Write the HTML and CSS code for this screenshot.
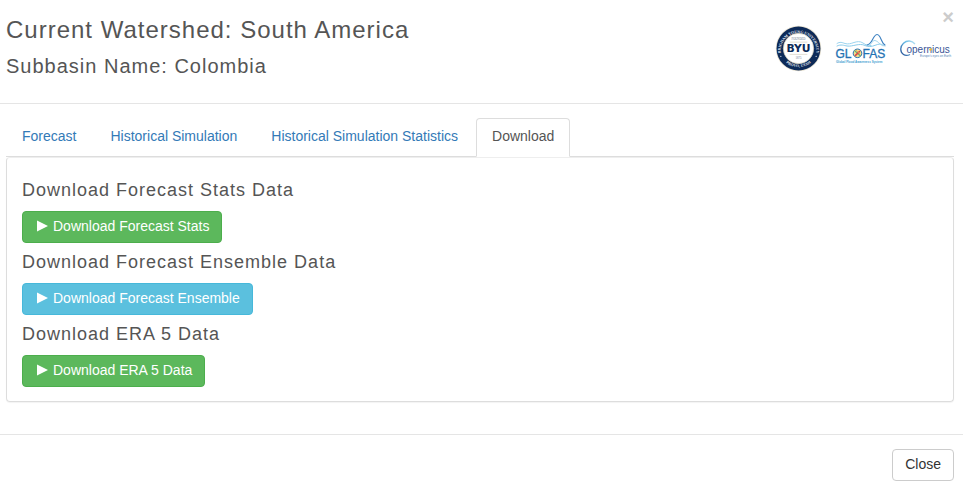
FILE: index.html
```html
<!DOCTYPE html>
<html lang="en">
<head>
<meta charset="utf-8">
<title>Current Watershed: South America</title>
<link rel="stylesheet" href="styles.css">
</head>
<body>
<main class="modal">
  <header class="modal-header">
    <div class="titles">
      <h1>Current Watershed: South America</h1>
      <h2>Subbasin Name: Colombia</h2>
    </div>
    <div class="logos">
      <svg class="logo-byu" viewBox="0 0 48 48" role="img" aria-label="Brigham Young University">
        <defs>
          <path id="arc-top" d="M7.500 34A18.200 18.200 0 1 1 40.500 34"/>
          <path id="arc-bottom" d="M7 34A20.500 20.500 0 0 0 41 34"/>
        </defs>
        <circle cx="24" cy="24" r="23.2" fill="#e6e0cf"/>
        <circle cx="24" cy="24" r="22.4" fill="#0d2a58"/>
        <circle cx="24" cy="24" r="15.500" fill="#fff" stroke="#d5cdb5" stroke-width=".7"/>
        <text class="ring"><textPath href="#arc-top" startOffset="50%">BRIGHAM YOUNG UNIVERSITY</textPath></text>
        <text class="ring"><textPath href="#arc-bottom" startOffset="50%">PROVO, UTAH</textPath></text>
        <circle cx="6" cy="32" r=".6" fill="#fff"/><circle cx="42" cy="32" r=".6" fill="#fff"/>
        <text class="seal-small" x="24" y="15">FOUNDED</text>
        <path d="M15 17.500H33M15 30H33" stroke="#cfc8b5" stroke-width=".6"/>
        <text class="seal-name" x="24" y="27.500">BYU</text>
        <text class="seal-small" x="24" y="35">1875</text>
      </svg>
      <svg class="logo-glofas" viewBox="0 0 50 30" role="img" aria-label="GLOFAS Global Flood Awareness System">
        <g fill="none" stroke-linecap="round">
          <path d="M1 9.500C4 7.500 6 8.500 9 9.500S15 9.500 18 8.500 24 7 27 9 31 11.500 35 11.500" stroke="#9bd4ef"/>
          <path d="M1 12C5 10 8 11.500 11 12S17 11.500 20 11 26 10 29 11.500 35 13 40 11 46 11 49 12" stroke="#8acbea"/>
          <path d="M31 11C35 10.500 36 6 38 3S42-.5 44 3 46 9.500 49 11" stroke="#3a7fc0" stroke-width="1.100"/>
          <path d="M33 11C36 11 36 6 39 6.500S43 10 47 12" stroke="#a6d8ef"/>
        </g>
        <text class="glofas-name" x="-.5" y="24" fill="#2372b3">GL</text>
        <circle cx="21.500" cy="19.300" r="4.300" fill="#f4df8a" stroke="#2372b3" stroke-width="1"/>
        <path d="M18.500 16.500L24.500 22" stroke="#67aa75" stroke-width="1.100"/>
        <path d="M19 21.800L24 17" stroke="#d84a47" stroke-width="1.600"/>
        <path d="M20 16L24 20" stroke="#e9a653" stroke-width=".8"/>
        <text class="glofas-name" x="26.500" y="24" fill="#2372b3">FAS</text>
        <text class="tagline" x="0" y="29" fill="#43a0d1">Global Flood Awareness System</text>
      </svg>
      <svg class="logo-copernicus" viewBox="0 0 50 18" role="img" aria-label="Copernicus Europe's eyes on Earth">
        <defs>
          <linearGradient id="swoosh" x1="0" y1="1" x2="1" y2="0">
            <stop offset="0" stop-color="#244c93"/><stop offset=".6" stop-color="#64b9e4"/><stop offset="1" stop-color="#bfe5f5"/>
          </linearGradient>
        </defs>
        <path d="M15 4C12 .3 7 0 3.500 3.200S-.3 12 3.500 14.500C5.500 15.800 8 15.500 10 14.500" fill="none" stroke="url(#swoosh)" stroke-width="1.300"/>
        <text class="copernicus-name" x="6.500" y="12.500" fill="#3a5596">opernicus</text>
        <circle cx="30.500" cy="9.500" r="1.300" fill="#f1bd35"/>
        <text class="tagline" x="20" y="17" fill="#5483b6">Europe's eyes on Earth</text>
      </svg>
    </div>
    <button class="dismiss" type="button" aria-label="Dismiss">×</button>
  </header>

  <section class="modal-body">
    <nav class="tabs">
      <a href="#forecast">Forecast</a>
      <a href="#historical">Historical Simulation</a>
      <a href="#statistics">Historical Simulation Statistics</a>
      <a class="active" href="#download" aria-current="page">Download</a>
    </nav>
    <div class="panel" id="download">
      <h3>Download Forecast Stats Data</h3>
      <button class="btn success" type="button"><svg class="play" viewBox="0 0 11 12" aria-hidden="true"><path d="M0 .4L11 6L0 11.600Z"/></svg>Download Forecast Stats</button>
      <h3>Download Forecast Ensemble Data</h3>
      <button class="btn info" type="button"><svg class="play" viewBox="0 0 11 12" aria-hidden="true"><path d="M0 .4L11 6L0 11.600Z"/></svg>Download Forecast Ensemble</button>
      <h3>Download ERA 5 Data</h3>
      <button class="btn success" type="button"><svg class="play" viewBox="0 0 11 12" aria-hidden="true"><path d="M0 .4L11 6L0 11.600Z"/></svg>Download ERA 5 Data</button>
    </div>
  </section>

  <footer class="modal-footer">
    <button class="btn default" type="button">Close</button>
  </footer>
</main>
</body>
</html>
```
FILE: styles.css
```css
* { box-sizing: border-box; }

body {
  margin: 0;
  background: #fff;
  color: #555;
  font-family: "Liberation Sans", Arial, sans-serif;
  font-size: 14px;
  line-height: 20px;
}

h1, h2, h3 {
  margin: 0;
  font-weight: 400;
  letter-spacing: 1px;
}

h1 { font-size: 24px; line-height: 28px; }
h2 { margin-top: 10px; font-size: 20px; line-height: 24px; }
h3 { font-size: 18px; line-height: 20px; }

.modal-header {
  position: relative;
  display: flex;
  justify-content: space-between;
  align-items: flex-start;
  padding: 16px 13px 25px 6px;
  border-bottom: 1px solid #e5e5e5;
}

.logos {
  display: flex;
  align-items: center;
  gap: 14px;
  padding-top: 9px;
}

.logos svg { display: block; overflow: visible; }
.logo-byu { width: 47px; height: 47px; }
.logo-glofas { width: 50px; height: 30px; }
.logo-copernicus { width: 50px; height: 18px; }

.ring {
  fill: #e9edf4;
  font: 700 4px "Liberation Serif", serif;
  text-anchor: middle;
}

.seal-small {
  fill: #6c7890;
  font: 3px "Liberation Serif", serif;
  text-anchor: middle;
}

.seal-name {
  fill: #0d2a58;
  font: 700 11px "DejaVu Sans", sans-serif;
  text-anchor: middle;
}

.glofas-name {
  font: 12px "Liberation Sans", sans-serif;
  stroke: #2372b3;
  stroke-width: .3px;
}

.copernicus-name { font: 10px "Liberation Sans", sans-serif; }

.tagline { font: 3px "Liberation Sans", sans-serif; }
.logo-glofas .tagline { font-weight: 700; }

.dismiss {
  position: absolute;
  top: 7px;
  right: 9px;
  padding: 0;
  border: 0;
  background: none;
  color: #ccc;
  font: 700 20px/20px "Liberation Sans", sans-serif;
}

.modal-body { padding: 14px 9px 32px 6px; }

.tabs {
  display: flex;
  gap: 2px;
  border-bottom: 1px solid #ddd;
}

.tabs a {
  margin-bottom: -1px;
  padding: 7px 15px 10px;
  border: 1px solid transparent;
  border-radius: 4px 4px 0 0;
  color: #337ab7;
  line-height: 20px;
  text-decoration: none;
}

.tabs .active {
  border-color: #ddd #ddd #fff;
  background: #fff;
  color: #555;
}

.panel {
  display: flex;
  flex-direction: column;
  align-items: flex-start;
  padding: 22px 15px 14px;
  border: 1px solid #ddd;
  border-top-color: #eee;
  border-radius: 4px;
  box-shadow: 0 1px 1px rgba(0, 0, 0, .05);
}

.panel h3 { margin-bottom: 11px; }
.panel .btn + h3 { margin-top: 9px; }

.btn {
  display: inline-flex;
  align-items: center;
  height: 32px;
  padding: 0 12px 2px;
  border: 1px solid;
  border-radius: 4px;
  font: inherit;
}

.success { border-color: #4cae4c; background: #5cb85c; color: #fff; }
.info { border-color: #46b8da; background: #5bc0de; color: #fff; }
.default { border-color: #ccc; background: #fff; color: #333; }

.play {
  width: 11px;
  height: 12px;
  margin: 0 5px 0 2px;
  fill: currentColor;
}

.modal-footer {
  display: flex;
  justify-content: flex-end;
  padding: 14px 9px 10px;
  border-top: 1px solid #e5e5e5;
}
```
